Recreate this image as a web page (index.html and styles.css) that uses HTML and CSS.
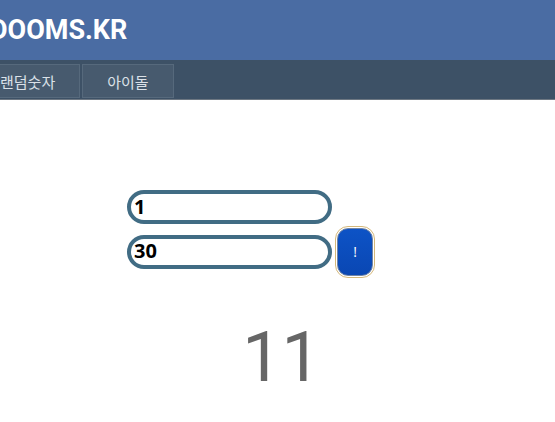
FILE: index.html
```html
<!DOCTYPE html>
<html lang="ko">
<head>
<meta charset="utf-8">
<link rel="stylesheet" href="styles.css">
</head>
<body>
<header class="top">
  <h1 class="logo">DOOMS.KR</h1>
</header>
<nav class="nav">
  <a class="tab">랜덤숫자</a>
  <a class="tab">아이돌</a>
</nav>
<main class="main">
  <div class="form">
    <input class="field" type="text" value="1">
    <div class="row">
      <input class="field" type="text" value="30">
      <button class="go" type="button">!</button>
    </div>
  </div>
  <div class="result">11</div>
</main>
</body>
</html>
```
FILE: styles.css
```css
html, body {
  margin: 0;
  padding: 0;
  background: #ffffff;
  overflow: hidden;
}
body {
  font-family: Roboto, "Noto Sans CJK KR", sans-serif;
  width: 555px;
  height: 422px;
}
.top {
  height: 60px;
  background: #4a6ca3;
  display: flex;
  align-items: center;
}
.logo {
  margin: 0 0 0 -10px;
  font-size: 27px;
  font-weight: 700;
  color: #ffffff;
  line-height: 1;
}
.nav {
  height: 40px;
  background: #3d5166;
  border-bottom: 1px solid #6d7782;
  box-sizing: border-box;
  display: flex;
  align-items: flex-start;
  padding-top: 4px;
  margin-left: -25px;
  gap: 2px;
}
.tab {
  height: 34px;
  box-sizing: border-box;
  padding: 0 24px;
  background: #475a6e;
  border: 1px solid #56697c;
  color: #dbe1e8;
  font-family: "Noto Sans CJK KR", sans-serif;
  font-size: 15px;
  display: flex;
  align-items: center;
}
.main {
  padding-top: 90px;
}
.form {
  margin-left: 127px;
  display: flex;
  flex-direction: column;
  align-items: flex-start;
  gap: 10px;
}
.row {
  display: flex;
  align-items: center;
  gap: 5px;
  height: 35px;
}
.field {
  width: 205px;
  height: 34px;
  box-sizing: border-box;
  border: 4px solid #416c84;
  border-radius: 17px;
  padding: 0 0 2px 3px;
  font-family: "Open Sans", sans-serif;
  font-weight: 700;
  font-size: 20px;
  color: #000;
  background: #fff;
  outline: none;
}
.go {
  width: 36px;
  height: 48px;
  border-radius: 11px;
  border: 1px solid #7185a6;
  background: linear-gradient(#0d53c6, #0a47b3);
  color: #ffffff;
  font-size: 14px;
  font-family: "Open Sans", sans-serif;
  padding: 0;
  outline: 1px solid #d5b87a;
  outline-offset: 1px;
  margin: -8px 0;
  flex-shrink: 0;
}
.result {
  margin-top: 53px;
  text-align: center;
  font-size: 70px;
  line-height: 70px;
  color: #666666;
  font-family: Roboto, sans-serif;
  padding-left: 8px;
}
```
